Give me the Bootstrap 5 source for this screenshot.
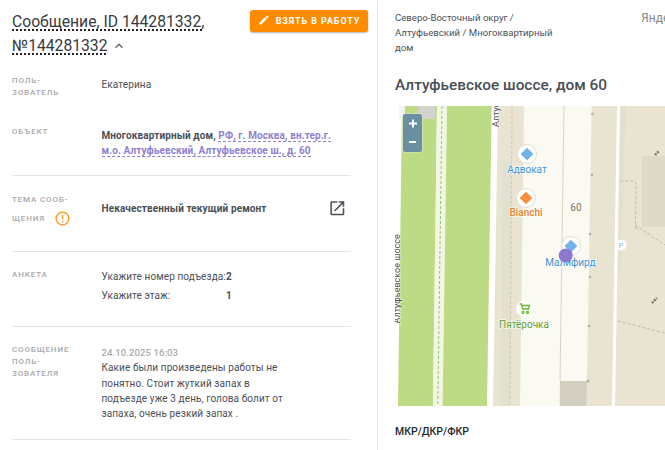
<!DOCTYPE html>
<html lang="ru">
<head>
<meta charset="utf-8">
<title>Сообщение</title>
<link href="https://cdn.jsdelivr.net/npm/bootstrap@5.3.0/dist/css/bootstrap.min.css" rel="stylesheet">
<style>
html,body{height:450px;overflow:hidden}
body{font-family:Roboto,"Liberation Sans",sans-serif;font-size:10px;letter-spacing:.1px;line-height:15px;color:#4a4f57;background:#fff}
.shell{height:450px;overflow:hidden}
.leftpane{width:378px;flex:none;border-right:1px solid #e3e3e3;padding:0 9px 0 12px;height:450px;overflow:hidden}
.rightpane{flex:1 1 auto;min-width:0;padding-left:17px;height:450px;overflow:hidden}
.headrow{padding-top:10px;height:66px}
.msgtitle{width:220px;font-size:15.700px;line-height:24px;font-weight:400;letter-spacing:0;color:#363b40}
.msgtitle span.dotted{text-decoration:underline dotted #222;text-underline-offset:2px;text-decoration-thickness:1.5px}
.chev{width:16px;height:16px;fill:#5f6368;vertical-align:-3px}
.takebtn{background:#ff8c00;color:#fff;border:0;border-radius:3px;height:22px;width:118px;font-size:9px;font-weight:700;letter-spacing:.9px;line-height:22px;padding:0;box-shadow:0 1px 2px rgba(0,0,0,.3)}
.takebtn:hover{background:#ff8c00;color:#fff}
.takebtn svg{width:12px;height:12px;fill:#fff;margin-right:6px;vertical-align:-2px}
.inforow{width:339px;border-bottom:1px solid #e3e3e3}
.nolineb{border-bottom:0}
.flabel{width:89.500px;flex:none;font-size:8px;line-height:12px;font-weight:500;letter-spacing:.85px;color:#a8a8ac;text-transform:uppercase}
.bolder{font-weight:700;color:#4a4f57}
.addr{color:#8f80d0;font-weight:700;border-bottom:1px dashed #8f80d0}
.rowa{height:60px;padding-top:9px}
.rowb{height:50px;padding-top:0}
.rowc{height:76px;padding-top:18px}
.rowd{height:75px;padding-top:17px}
.rowe{height:113px;padding-top:17px}
.valtop{margin-top:2px}
.valtop15{margin-top:1.500px}
.valtopic{margin-top:6.500px}
.topiclabel{line-height:19px;margin-top:-4px}
.warnico{width:15px;height:15px;margin-left:10px;vertical-align:-5px}
.extico{width:18.600px;height:18.600px;fill:#4a5058;margin-left:auto;margin-right:4.700px;margin-top:4.700px}
.qkey{width:124.500px;flex:none}
.qrow{height:19px}
.dateline{font-size:9.500px;font-weight:500;color:#aaa;margin-top:1px}
.msgbody{max-width:186px;line-height:15.300px}
.crumbs{width:166px;font-size:9.600px;letter-spacing:0;line-height:15px;padding-top:9.500px;color:#4a4f57;flex:none}
.yandex{margin-left:80px;padding-top:11px;font-size:12px;color:#888;white-space:nowrap}
.addrhead{font-size:15.400px;line-height:20px;font-weight:500;letter-spacing:0;color:#4a4f57;margin:0;padding-top:20px;height:51px}
.mapbox{width:270px;height:300px;overflow:hidden}
.mapbox svg{display:block}
.subhead{font-size:10.500px;letter-spacing:0;line-height:14px;font-weight:500;color:#23272b;padding-top:19px}
.mt{font-family:Roboto,"Liberation Sans",sans-serif;font-size:10px;letter-spacing:0;paint-order:stroke;stroke:#fff;stroke-width:1.5px;stroke-opacity:.75;text-anchor:middle}
.rt{font-size:9px;text-anchor:start}
</style>
</head>
<body>
<div class="shell d-flex">
  <aside class="leftpane">
    <div class="headrow d-flex justify-content-between align-items-start">
      <div class="msgtitle"><span class="dotted">Сообщение, ID 144281332,</span> <span class="dotted">№144281332</span> <svg class="chev" viewBox="0 0 24 24"><path d="M12 8l-6 6 1.41 1.41L12 10.83l4.59 4.58L18 14z"/></svg></div>
      <button type="button" class="btn takebtn"><svg viewBox="0 0 24 24"><path d="M3 17.25V21h3.75L17.81 9.94l-3.75-3.75L3 17.25zM20.71 7.04c.39-.39.39-1.02 0-1.41l-2.34-2.34c-.39-.39-1.02-.39-1.41 0l-1.83 1.83 3.75 3.75 1.83-1.83z"/></svg>ВЗЯТЬ В РАБОТУ</button>
    </div>
    <div class="inforow nolineb rowa d-flex">
      <div class="flabel">Поль-<br>зователь</div>
      <div class="valtop">Екатерина</div>
    </div>
    <div class="inforow rowb d-flex">
      <div class="flabel">Объект</div>
      <div class="bolder valtop15" style="width:240px">Многоквартирный дом, <span class="addr">РФ, г. Москва, вн.тер.г. м.о. Алтуфьевский, Алтуфьевское ш., д. 60</span></div>
    </div>
    <div class="inforow rowc d-flex">
      <div class="flabel topiclabel">Тема сооб-<br>щения<svg class="warnico" viewBox="0 0 16 16"><circle cx="8" cy="8" r="6.8" fill="none" stroke="#ff9d2e" stroke-width="1.6"/><path d="M8 4.200v4.800M8 10.600v1.500" stroke="#ff9d2e" stroke-width="1.600"/></svg></div>
      <div class="bolder valtopic">Некачественный текущий ремонт</div>
      <svg class="extico" viewBox="0 0 24 24"><path d="M19 19H5V5h7V3H5c-1.11 0-2 .9-2 2v14c0 1.1.89 2 2 2h14c1.1 0 2-.9 2-2v-7h-2v7zM14 3v2h3.59l-9.83 9.83 1.41 1.41L19 6.41V10h2V3h-7z"/></svg>
    </div>
    <div class="inforow rowd d-flex">
      <div class="flabel">Анкета</div>
      <div>
        <div class="qrow d-flex"><div class="qkey">Укажите номер подъезда:</div><div class="bolder">2</div></div>
        <div class="qrow d-flex"><div class="qkey">Укажите этаж:</div><div class="bolder">1</div></div>
      </div>
    </div>
    <div class="inforow rowe d-flex">
      <div class="flabel">Сообщение<br>поль-<br>зователя</div>
      <div class="msgbody">
        <div class="dateline">24.10.2025 16:03</div>
        <div>Какие были произведены работы не понятно. Стоит жуткий запах в подъезде уже 3 день, голова болит от запаха, очень резкий запах .</div>
      </div>
    </div>
  </aside>
  <main class="rightpane">
    <div class="d-flex">
      <div class="crumbs">Северо-Восточный округ / Алтуфьевский / Многоквартирный дом</div>
      <div class="yandex">Яндекс</div>
    </div>
    <h2 class="addrhead">Алтуфьевское шоссе, дом 60</h2>
    <div class="mapbox">
      <svg width="270" height="300" viewBox="395 106 270 300" role="img" aria-label="Карта">
        <rect x="395" y="106" width="270" height="300" fill="#fff"/>
        <polygon points="402,106 437,106 433,406 398,406" fill="#bdda85"/>
        <polygon points="437,106 447,106 442.6,406 433,406" fill="#f2f7e4"/>
        <line x1="442" y1="106" x2="437.8" y2="406" stroke="#8fc46e" stroke-width="1" stroke-dasharray="3 2"/>
        <polygon points="447,106 491.7,106 487,406 442.6,406" fill="#bdda85"/>
        <polygon points="498,106 617,106 612,406 493,406" fill="#e9e4d1"/>
        <polygon points="503,159 511.5,159 510,406 500,406" fill="#e2e0cf"/>
        <line x1="512" y1="106" x2="510" y2="406" stroke="#cfc8b2" stroke-width="1" stroke-dasharray="3 2"/>
        <polygon points="524,106 591.7,106 586.5,406 520,406" fill="#fbfaf2"/>
        <line x1="564" y1="106" x2="560" y2="381" stroke="#d9d5c3" stroke-width="1"/>
        <polygon points="560,381 587,381 586.5,406 559.6,406" fill="#d3cfc0"/>
        <polygon points="620,106 665,106 665,406 615,406" fill="#e9e4d1"/>
        <polygon points="620.5,106 626,106 621,270 618,270" fill="#e2e1cf"/>
        <rect x="642" y="156" width="23" height="71" fill="#dddbc8"/>
        <path d="M620 181h13q3 0 3 3l-.5 42q0 3 2 4M635 225L665 245M618 321L665 333" fill="none" stroke="#bdb9a8" stroke-width="1" stroke-dasharray="3 2"/>
        <g fill="#b5b0a0"><circle cx="592.5" cy="114" r="1.3"/><circle cx="592" cy="175" r="1.3"/><circle cx="590" cy="234" r="1.3"/><circle cx="590" cy="277" r="1.3"/><circle cx="589" cy="326" r="1.3"/><circle cx="588" cy="381" r="1.5"/></g>
        <path d="M652 303l5-5M655 155l4-4" stroke="#77746a" stroke-width="2.4" stroke-dasharray="2 1"/>
        <rect x="418" y="106" width="17" height="13" fill="#d3d3cd"/>
        <rect x="399" y="106" width="6" height="12" fill="#f2f2f2"/>
        <rect x="402.5" y="113.5" width="20" height="39" rx="2" fill="#dfe8c8"/>
        <rect x="403" y="114" width="19" height="38" rx="2" fill="#6b8fa0"/>
        <path d="M409 123.500h8M413 119.500v8M409 142h7" stroke="#fff" stroke-width="2"/>
        <text class="mt rt" transform="translate(499,127) rotate(-90)" fill="#4b4b4b">Алтуфьевское</text>
        <text class="mt rt" transform="translate(400,323.500) rotate(-90)" fill="#4b4b4b">Алтуфьевское шоссе</text>
        <circle cx="527" cy="154" r="9.500" fill="#fff" stroke="#e2ded0"/>
        <rect x="522.500" y="149.500" width="9" height="9" fill="#6fb3ea" transform="rotate(45 527 154)"/>
        <text class="mt" x="527" y="173" fill="#3b94d0">Адвокат</text>
        <circle cx="526" cy="198" r="9.500" fill="#fff" stroke="#e2ded0"/>
        <rect x="521.500" y="193.500" width="9" height="9" fill="#f98d3f" transform="rotate(45 526 198)"/>
        <text class="mt" x="526" y="216" fill="#e0812c" font-weight="500">Bianchi</text>
        <text x="576" y="211" font-size="10" fill="#77756b" text-anchor="middle" font-family="Roboto,sans-serif">60</text>
        <circle cx="571" cy="246" r="9.500" fill="#fff" stroke="#e2ded0"/>
        <rect x="566.500" y="241.500" width="9" height="9" fill="#6fb3ea" transform="rotate(45 571 246)"/>
        <circle cx="621" cy="245" r="5.500" fill="#fff"/>
        <text x="621" y="248" font-size="7.500" fill="#8dbde6" text-anchor="middle" font-family="Roboto,sans-serif">P</text>
        <text class="mt" x="570.500" y="266" fill="#3b94d0">Малифирд</text>
        <circle cx="565.700" cy="255.500" r="7" fill="#8e78cf"/>
        <circle cx="524" cy="308.500" r="8" fill="#fff"/>
        <path d="M519.500 304h2l1 5h6l1-3.500h-7M523 311.500a1 1 0 1 0 .01 0M527.500 311.500a1 1 0 1 0 .01 0" fill="none" stroke="#69b82e" stroke-width="1.300"/>
        <text class="mt" x="524" y="328" fill="#5f9e2a">Пятёрочка</text>
      </svg>
    </div>
    <div class="subhead">МКР/ДКР/ФКР</div>
  </main>
</div>
<script src="https://cdn.jsdelivr.net/npm/bootstrap@5.3.0/dist/js/bootstrap.bundle.min.js"></script>
</body>
</html>
